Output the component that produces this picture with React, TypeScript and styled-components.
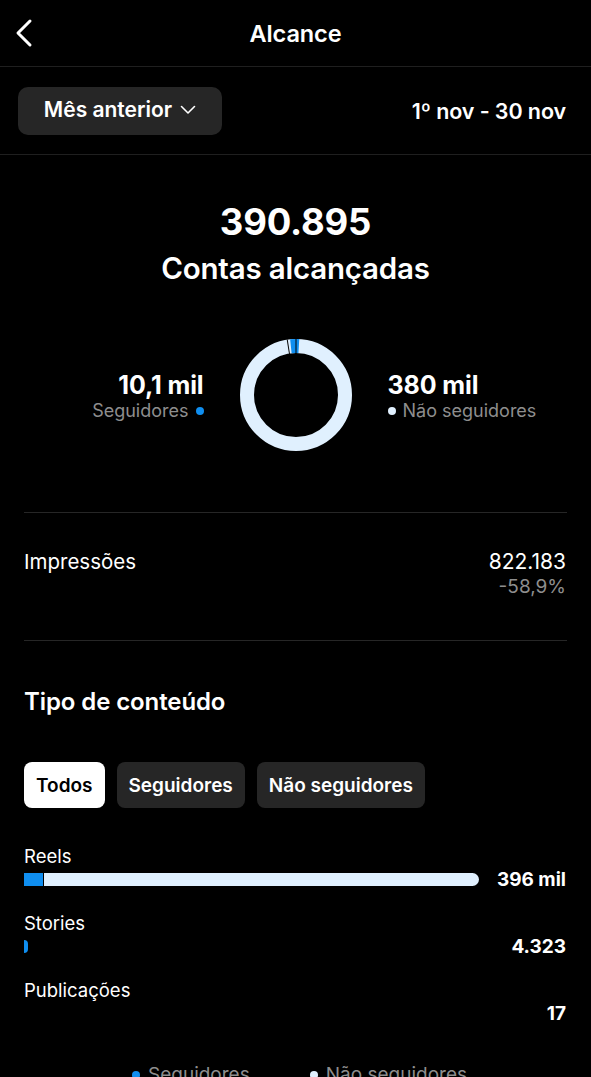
import React from "react";
import styled, { createGlobalStyle } from "styled-components";

const Global = createGlobalStyle`
  html, body { margin: 0; padding: 0; background: #000; }
  body { font-family: Inter, "Noto Sans", sans-serif; color: #fff; -webkit-font-smoothing: antialiased; }
  * { box-sizing: border-box; }
`;

const Page = styled.div`
  width: 591px;
  height: 1077px;
  overflow: hidden;
  background: #000;
`;

const Header = styled.header`
  position: relative;
  height: 67px;
  display: flex;
  align-items: center;
  justify-content: center;
  border-bottom: 1px solid #1f1f1f;
`;

const BackButton = styled.button`
  position: absolute;
  left: 8px;
  top: 16px;
  background: none;
  border: 0;
  padding: 0;
  width: 32px;
  height: 34px;
  display: flex;
  align-items: center;
  justify-content: center;
`;

const Title = styled.h1`
  margin: 0;
  font-size: 23.5px;
  font-weight: 600;
  letter-spacing: -0.1px;
`;

const FilterBar = styled.div`
  height: 88px;
  padding: 0 25px 0 18px;
  display: flex;
  align-items: center;
  justify-content: space-between;
  border-bottom: 1px solid #1f1f1f;
`;

const Dropdown = styled.button`
  height: 48px;
  width: 204px;
  border: 0;
  border-radius: 10px;
  background: #262626;
  color: #fff;
  font-family: inherit;
  font-size: 21px;
  font-weight: 600;
  display: flex;
  align-items: center;
  justify-content: center;
  gap: 8px;
  padding: 0 0 2px 0;
`;

const DateRange = styled.span`
  font-size: 21.5px;
  font-weight: 600;
  letter-spacing: -0.1px;
`;

const Hero = styled.section`
  display: flex;
  flex-direction: column;
  align-items: center;
  padding-top: 45px;
`;

const BigNumber = styled.div`
  font-size: 36.5px;
  font-weight: 700;
  line-height: 44px;
  letter-spacing: -0.2px;
`;

const BigLabel = styled.div`
  font-size: 29.5px;
  font-weight: 600;
  line-height: 36px;
  margin-top: 6px;
  letter-spacing: -0.2px;
`;

const DonutRow = styled.div`
  display: grid;
  grid-template-columns: 1fr 114px 1fr;
  align-items: center;
  column-gap: 30px;
  width: 100%;
  margin-top: 52px;
`;

const Stat = styled.div<{ $align: "left" | "right" }>`
  display: flex;
  flex-direction: column;
  align-items: ${(p) => (p.$align === "right" ? "flex-end" : "flex-start")};
  ${(p) => (p.$align === "right" ? "padding-right: 5px;" : "padding-left: 5px;")}
  margin-top: 2px;
`;

const StatValue = styled.div`
  font-size: 25px;
  font-weight: 700;
  line-height: 30px;
  letter-spacing: -0.1px;
`;

const StatLabel = styled.div`
  font-size: 18px;
  color: #8e8e8e;
  display: flex;
  align-items: center;
  gap: 7px;
  line-height: 22px;
`;

const Dot = styled.span<{ $color: string }>`
  width: 8px;
  height: 8px;
  border-radius: 50%;
  background: ${(p) => p.$color};
  display: inline-block;
  flex-shrink: 0;
`;

const Content = styled.div`
  padding: 0 24px;
  margin-top: 60px;
  display: flex;
  flex-direction: column;
`;

const Divider = styled.hr`
  border: 0;
  height: 1px;
  background: #262626;
  margin: 0;
  flex-shrink: 0;
`;

const MetricRow = styled.div`
  display: flex;
  justify-content: space-between;
  align-items: flex-start;
  height: 127px;
  padding-top: 37px;
  flex-shrink: 0;
`;

const MetricName = styled.div`
  font-size: 20.5px;
  line-height: 24px;
  font-weight: 400;
`;

const MetricValues = styled.div`
  display: flex;
  flex-direction: column;
  align-items: flex-end;
  font-size: 21px;
  line-height: 24px;
  padding-right: 1px;
`;

const Change = styled.span`
  color: #8e8e8e;
  font-size: 19px;
  line-height: 25px;
`;

const SectionTitle = styled.h2`
  margin: 47px 0 0;
  font-size: 24px;
  font-weight: 600;
  line-height: 28px;
  letter-spacing: -0.1px;
`;

const Tabs = styled.div`
  display: flex;
  gap: 12px;
  margin-top: 46px;
`;

const Tab = styled.button<{ $active?: boolean }>`
  height: 46px;
  padding: 0 12px;
  border: 0;
  border-radius: 8px;
  font-family: inherit;
  font-size: 19px;
  font-weight: 600;
  background: ${(p) => (p.$active ? "#fff" : "#262626")};
  color: ${(p) => (p.$active ? "#000" : "#fff")};
`;

const Breakdown = styled.div`
  display: flex;
  flex-direction: column;
  margin-top: 37px;
  gap: 21px;
`;

const Item = styled.div`
  display: flex;
  flex-direction: column;
`;

const ItemLabel = styled.div`
  font-size: 18.5px;
  line-height: 22px;
`;

const ItemBody = styled.div`
  display: flex;
  align-items: center;
  height: 24px;
  gap: 18px;
`;

const Track = styled.div`
  flex: 1;
  min-width: 0;
  display: flex;
  height: 13px;
`;

const Bar = styled.div`
  display: flex;
  gap: 1px;
  height: 13px;
  border-radius: 0 7px 7px 0;
  overflow: hidden;
`;

const Seg = styled.div<{ $color: string }>`
  height: 100%;
  background: ${(p) => p.$color};
`;

const ItemValue = styled.div`
  font-size: 19px;
  font-weight: 700;
  margin-left: auto;
  padding-right: 1px;
  white-space: nowrap;
  flex-shrink: 0;
`;

const Legend = styled.div`
  display: flex;
  justify-content: center;
  gap: 60px;
  margin-top: 38px;
  padding-left: 8px;
`;

const LegendItem = styled.div`
  display: flex;
  align-items: center;
  gap: 8px;
  color: #8e8e8e;
  font-size: 19px;
  line-height: 24px;
`;

const BLUE = "#0f8ef0";
const LIGHT = "#e0f0fe";

function Donut() {
  const r = 49;
  const c = 2 * Math.PI * r;
  const frac = 0.026;
  return (
    <svg width="114" height="114" viewBox="0 0 114 114">
      <circle cx="57" cy="57" r={r} fill="none" stroke={LIGHT} strokeWidth="14" />
      <circle
        cx="57"
        cy="57"
        r={r}
        fill="none"
        stroke={BLUE}
        strokeWidth="14"
        strokeDasharray={`${c * frac} ${c}`}
        transform="rotate(-96 57 57)"
      />
      <line x1="57" y1="1" x2="57" y2="16" stroke="#000" strokeWidth="1" transform="rotate(-9 57 57)" />
      <line x1="57" y1="1" x2="57" y2="16" stroke="#000" strokeWidth="1" />
    </svg>
  );
}

const items = [
  { label: "Reels", value: "396 mil", blue: 19, light: 435 },
  { label: "Stories", value: "4.323", blue: 4, light: 0 },
  { label: "Publicações", value: "17", blue: 0, light: 0 },
];

export default function App() {
  return (
    <>
      <Global />
      <Page>
        <Header>
          <BackButton aria-label="Voltar">
            <svg width="22" height="30" viewBox="0 0 22 30">
              <path d="M17 3 L5 15 L17 27" fill="none" stroke="#fff" strokeWidth="3" strokeLinecap="round" strokeLinejoin="round" />
            </svg>
          </BackButton>
          <Title>Alcance</Title>
        </Header>
        <FilterBar>
          <Dropdown>
            Mês anterior
            <svg width="16" height="10" viewBox="0 0 16 10">
              <path d="M1.5 1.5 L8 8 L14.5 1.5" fill="none" stroke="#fff" strokeWidth="1.6" strokeLinecap="round" strokeLinejoin="round" />
            </svg>
          </Dropdown>
          <DateRange>1º nov - 30 nov</DateRange>
        </FilterBar>
        <Hero>
          <BigNumber>390.895</BigNumber>
          <BigLabel>Contas alcançadas</BigLabel>
          <DonutRow>
            <Stat $align="right">
              <StatValue>10,1 mil</StatValue>
              <StatLabel>
                Seguidores <Dot $color={BLUE} />
              </StatLabel>
            </Stat>
            <Donut />
            <Stat $align="left">
              <StatValue>380 mil</StatValue>
              <StatLabel>
                <Dot $color={LIGHT} /> Não seguidores
              </StatLabel>
            </Stat>
          </DonutRow>
        </Hero>
        <Content>
          <Divider />
          <MetricRow>
            <MetricName>Impressões</MetricName>
            <MetricValues>
              <span>822.183</span>
              <Change>-58,9%</Change>
            </MetricValues>
          </MetricRow>
          <Divider />
          <SectionTitle>Tipo de conteúdo</SectionTitle>
          <Tabs>
            <Tab $active>Todos</Tab>
            <Tab>Seguidores</Tab>
            <Tab>Não seguidores</Tab>
          </Tabs>
          <Breakdown>
            {items.map((it) => (
              <Item key={it.label}>
                <ItemLabel>{it.label}</ItemLabel>
                <ItemBody>
                  <Track>
                    {it.blue + it.light > 0 && (
                      <Bar>
                        <Seg $color={BLUE} style={{ width: it.blue }} />
                        {it.light > 0 && <Seg $color={LIGHT} style={{ width: it.light }} />}
                      </Bar>
                    )}
                  </Track>
                  <ItemValue>{it.value}</ItemValue>
                </ItemBody>
              </Item>
            ))}
          </Breakdown>
          <Legend>
            <LegendItem>
              <Dot $color={BLUE} /> Seguidores
            </LegendItem>
            <LegendItem>
              <Dot $color={LIGHT} /> Não seguidores
            </LegendItem>
          </Legend>
        </Content>
      </Page>
    </>
  );
}
